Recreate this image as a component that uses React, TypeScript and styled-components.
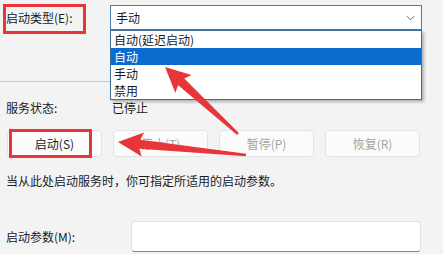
import styled, { createGlobalStyle } from "styled-components";

const GlobalStyle = createGlobalStyle`
  html, body {
    margin: 0;
    padding: 0;
    background: #f3f3f3;
    overflow: hidden;
  }
  body {
    font-family: "Noto Sans CJK SC", "Noto Sans", sans-serif;
    font-size: 12px;
    color: #1b1b1b;
  }
`;

const ANNOTATION = "#e8353a";

function arrowPoints(tail: [number, number], tip: [number, number]) {
  const dx = tip[0] - tail[0];
  const dy = tip[1] - tail[1];
  const len = Math.hypot(dx, dy);
  const ux = dx / len;
  const uy = dy / len;
  const nx = -uy;
  const ny = ux;
  const headLen = 22;
  const headHalf = 12;
  const neckHalf = 4.5;
  const tailHalf = 1.2;
  const neck: [number, number] = [tip[0] - ux * headLen, tip[1] - uy * headLen];
  const barb: [number, number] = [tip[0] - ux * (headLen + 3), tip[1] - uy * (headLen + 3)];
  const pts: [number, number][] = [
    [tail[0] + nx * tailHalf, tail[1] + ny * tailHalf],
    [neck[0] + nx * neckHalf, neck[1] + ny * neckHalf],
    [barb[0] + nx * headHalf, barb[1] + ny * headHalf],
    tip,
    [barb[0] - nx * headHalf, barb[1] - ny * headHalf],
    [neck[0] - nx * neckHalf, neck[1] - ny * neckHalf],
    [tail[0] - nx * tailHalf, tail[1] - ny * tailHalf],
  ];
  return pts.map((p) => p.map((v) => v.toFixed(1)).join(",")).join(" ");
}

export default function App() {
  return (
    <>
      <GlobalStyle />
      <Page>
        <TypeRow>
          <Label marked>启动类型(E):</Label>
          <ComboWrap>
            <Combo>
              <span>手动</span>
              <Chevron viewBox="0 0 10 6">
                <path d="M1 1 L5 5 L9 1" fill="none" stroke="#555" strokeWidth="1" />
              </Chevron>
            </Combo>
            <DropList>
              <Option>自动(延迟启动)</Option>
              <Option selected>自动</Option>
              <Option>手动</Option>
              <Option>禁用</Option>
            </DropList>
          </ComboWrap>
        </TypeRow>

        <Divider />

        <StatusRow>
          <span>服务状态:</span>
          <span>已停止</span>
        </StatusRow>

        <ButtonRow>
          <ActionButton marked>启动(S)</ActionButton>
          <ActionButton disabled>停止(T)</ActionButton>
          <ActionButton disabled>暂停(P)</ActionButton>
          <ActionButton disabled>恢复(R)</ActionButton>
        </ButtonRow>

        <Hint>当从此处启动服务时，你可指定所适用的启动参数。</Hint>

        <ParamRow>
          <span>启动参数(M):</span>
          <ParamInput />
        </ParamRow>
      </Page>

      <Arrows viewBox="0 0 443 254">
        <polygon points={arrowPoints([238, 134], [165, 67])} fill={ANNOTATION} />
        <polygon points={arrowPoints([246, 155], [118, 142])} fill={ANNOTATION} />
      </Arrows>
    </>
  );
}

const Page = styled.div`
  display: flex;
  flex-direction: column;
  width: 416px;
  height: 254px;
  padding: 5px 0 0 6px;
`;

const TypeRow = styled.div`
  display: grid;
  grid-template-columns: 104px 312px;
  align-items: center;
  height: 25px;
`;

const Label = styled.span<{ marked?: boolean }>`
  position: relative;
  line-height: 16px;

  &::after {
    content: "";
    display: ${({ marked }) => (marked ? "block" : "none")};
    position: absolute;
    left: -3px;
    top: -6px;
    width: 77px;
    height: 24px;
    border: 3px solid ${ANNOTATION};
  }
`;

const ComboWrap = styled.div`
  position: relative;
  height: 25px;
`;

const Combo = styled.div`
  display: flex;
  align-items: center;
  justify-content: space-between;
  box-sizing: border-box;
  height: 25px;
  padding: 0 6px 0 5px;
  background: #ffffff;
  border: 1px solid #4a7ea8;
`;

const Chevron = styled.svg`
  width: 9px;
  height: 6px;
`;

const DropList = styled.div`
  position: absolute;
  left: 0;
  top: 25px;
  z-index: 2;
  width: 312px;
  box-sizing: border-box;
  border: 1px solid #3d6f98;
  background: #ffffff;
  box-shadow: 2px 2px 3px rgba(0, 0, 0, 0.28);
`;

const Option = styled.div<{ selected?: boolean }>`
  height: 17px;
  line-height: 17px;
  padding-left: 3px;
  background: ${({ selected }) => (selected ? "#0a6ccf" : "transparent")};
  color: ${({ selected }) => (selected ? "#ffffff" : "#1b1b1b")};
`;

const Divider = styled.div`
  margin: 51px 0 0 -6px;
  width: 422px;
  height: 1px;
  background: #c9c9c9;
`;

const StatusRow = styled.div`
  display: grid;
  grid-template-columns: 106px auto;
  margin-top: 18px;
  line-height: 16px;
`;

const ButtonRow = styled.div`
  display: grid;
  grid-template-columns: repeat(4, 95px);
  column-gap: 11px;
  margin: 14px 0 0 1px;
`;

const ActionButton = styled.button<{ marked?: boolean }>`
  position: relative;
  height: 27px;
  padding: 0;
  font-family: inherit;
  font-size: 12px;
  background: #fbfbfb;
  color: ${({ disabled }) => (disabled ? "#a3a3a3" : "#1b1b1b")};
  border: 1px solid #e3e3e3;
  border-radius: 4px;

  &::after {
    content: "";
    display: ${({ marked }) => (marked ? "block" : "none")};
    position: absolute;
    left: 1px;
    top: -2px;
    width: 77px;
    height: 23px;
    border: 3px solid ${ANNOTATION};
  }
`;

const Hint = styled.div`
  margin-top: 16px;
  line-height: 16px;
`;

const ParamRow = styled.div`
  display: grid;
  grid-template-columns: 125px 290px;
  align-items: center;
  margin-top: 32px;
`;

const ParamInput = styled.div`
  height: 31px;
  box-sizing: border-box;
  background: #ffffff;
  border: 1px solid #e2e2e2;
  border-bottom-color: #8a8a8a;
  border-radius: 4px;
`;

const Arrows = styled.svg`
  position: absolute;
  left: 0;
  top: 0;
  width: 443px;
  height: 254px;
  z-index: 5;
  pointer-events: none;
`;
